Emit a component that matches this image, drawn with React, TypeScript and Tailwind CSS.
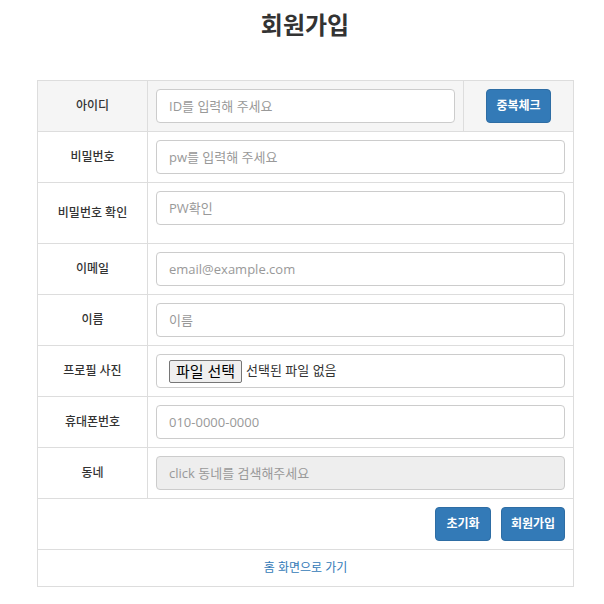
import React from 'react';

const font = { fontFamily: '"Open Sans", "Noto Sans CJK KR", sans-serif' };

function Label({ children }: { children: React.ReactNode }) {
  return (
    <td className="border border-[#ddd] p-2 text-center align-middle text-[12px] font-medium text-[#333]">
      {children}
    </td>
  );
}

function Field({ placeholder, disabled }: { placeholder: string; disabled?: boolean }) {
  return (
    <input
      type="text"
      disabled={disabled}
      placeholder={placeholder}
      className={
        'block h-[34px] w-full rounded-[4px] border border-[#ccc] px-3 text-[13px] text-[#555] placeholder:text-[#999] outline-none ' +
        (disabled ? 'bg-[#eee]' : 'bg-white')
      }
      style={font}
    />
  );
}

export default function App() {
  return (
    <div className="min-h-[604px] bg-white text-[#333]" style={font}>
      <div className="ml-[37px] w-[536px]">
        <h1 className="pt-[7px] pb-[37px] text-center text-[24px] font-bold leading-[36px] text-[#333]">회원가입</h1>

        <table className="w-[536px] table-fixed border-collapse">
          <colgroup>
            <col className="w-[110px]" />
            <col className="w-[316px]" />
            <col className="w-[110px]" />
          </colgroup>
          <tbody>
            <tr className="bg-[#f5f5f5]">
              <Label>아이디</Label>
              <td className="border border-[#ddd] p-2">
                <Field placeholder="ID를 입력해 주세요" />
              </td>
              <td className="border border-[#ddd] p-2 text-center">
                <button className="h-[34px] w-[65px] rounded-[4px] border border-[#2e6da4] bg-[#337ab7] text-[12px] font-bold text-white">
                  중복체크
                </button>
              </td>
            </tr>
            <tr>
              <Label>비밀번호</Label>
              <td colSpan={2} className="border border-[#ddd] p-2">
                <Field placeholder="pw를 입력해 주세요" />
              </td>
            </tr>
            <tr>
              <Label>비밀번호 확인</Label>
              <td colSpan={2} className="border border-[#ddd] p-2">
                <Field placeholder="PW확인" />
                <div className="h-[10px]" />
              </td>
            </tr>
            <tr>
              <Label>이메일</Label>
              <td colSpan={2} className="border border-[#ddd] p-2">
                <Field placeholder="email@example.com" />
              </td>
            </tr>
            <tr>
              <Label>이름</Label>
              <td colSpan={2} className="border border-[#ddd] p-2">
                <Field placeholder="이름" />
              </td>
            </tr>
            <tr>
              <Label>프로필 사진</Label>
              <td colSpan={2} className="border border-[#ddd] p-2">
                <div className="flex h-[34px] items-center gap-[4px] rounded-[4px] border border-[#ccc] bg-white pl-3">
                  <span className="flex h-[23px] items-center rounded-[2px] border border-[#767676] bg-[#efefef] px-[6px] text-[15px] leading-none text-black">
                    파일 선택
                  </span>
                  <span className="text-[13px] text-[#333]">선택된 파일 없음</span>
                </div>
              </td>
            </tr>
            <tr>
              <Label>휴대폰번호</Label>
              <td colSpan={2} className="border border-[#ddd] p-2">
                <Field placeholder="010-0000-0000" />
              </td>
            </tr>
            <tr>
              <Label>동네</Label>
              <td colSpan={2} className="border border-[#ddd] p-2">
                <Field placeholder="click 동네를 검색해주세요" disabled />
              </td>
            </tr>
            <tr>
              <td colSpan={3} className="border border-[#ddd] p-2">
                <div className="flex justify-end gap-[10px]">
                  <button className="h-[34px] w-[56px] rounded-[4px] border border-[#2e6da4] bg-[#337ab7] text-[12px] font-bold text-white">
                    초기화
                  </button>
                  <button className="h-[34px] w-[64px] rounded-[4px] border border-[#2e6da4] bg-[#337ab7] text-[12px] font-bold text-white">
                    회원가입
                  </button>
                </div>
              </td>
            </tr>
            <tr>
              <td colSpan={3} className="border border-[#ddd] p-2 text-center text-[12px] leading-[20px]">
                <a className="text-[#337ab7]">홈 화면으로 가기</a>
              </td>
            </tr>
          </tbody>
        </table>
      </div>
    </div>
  );
}
